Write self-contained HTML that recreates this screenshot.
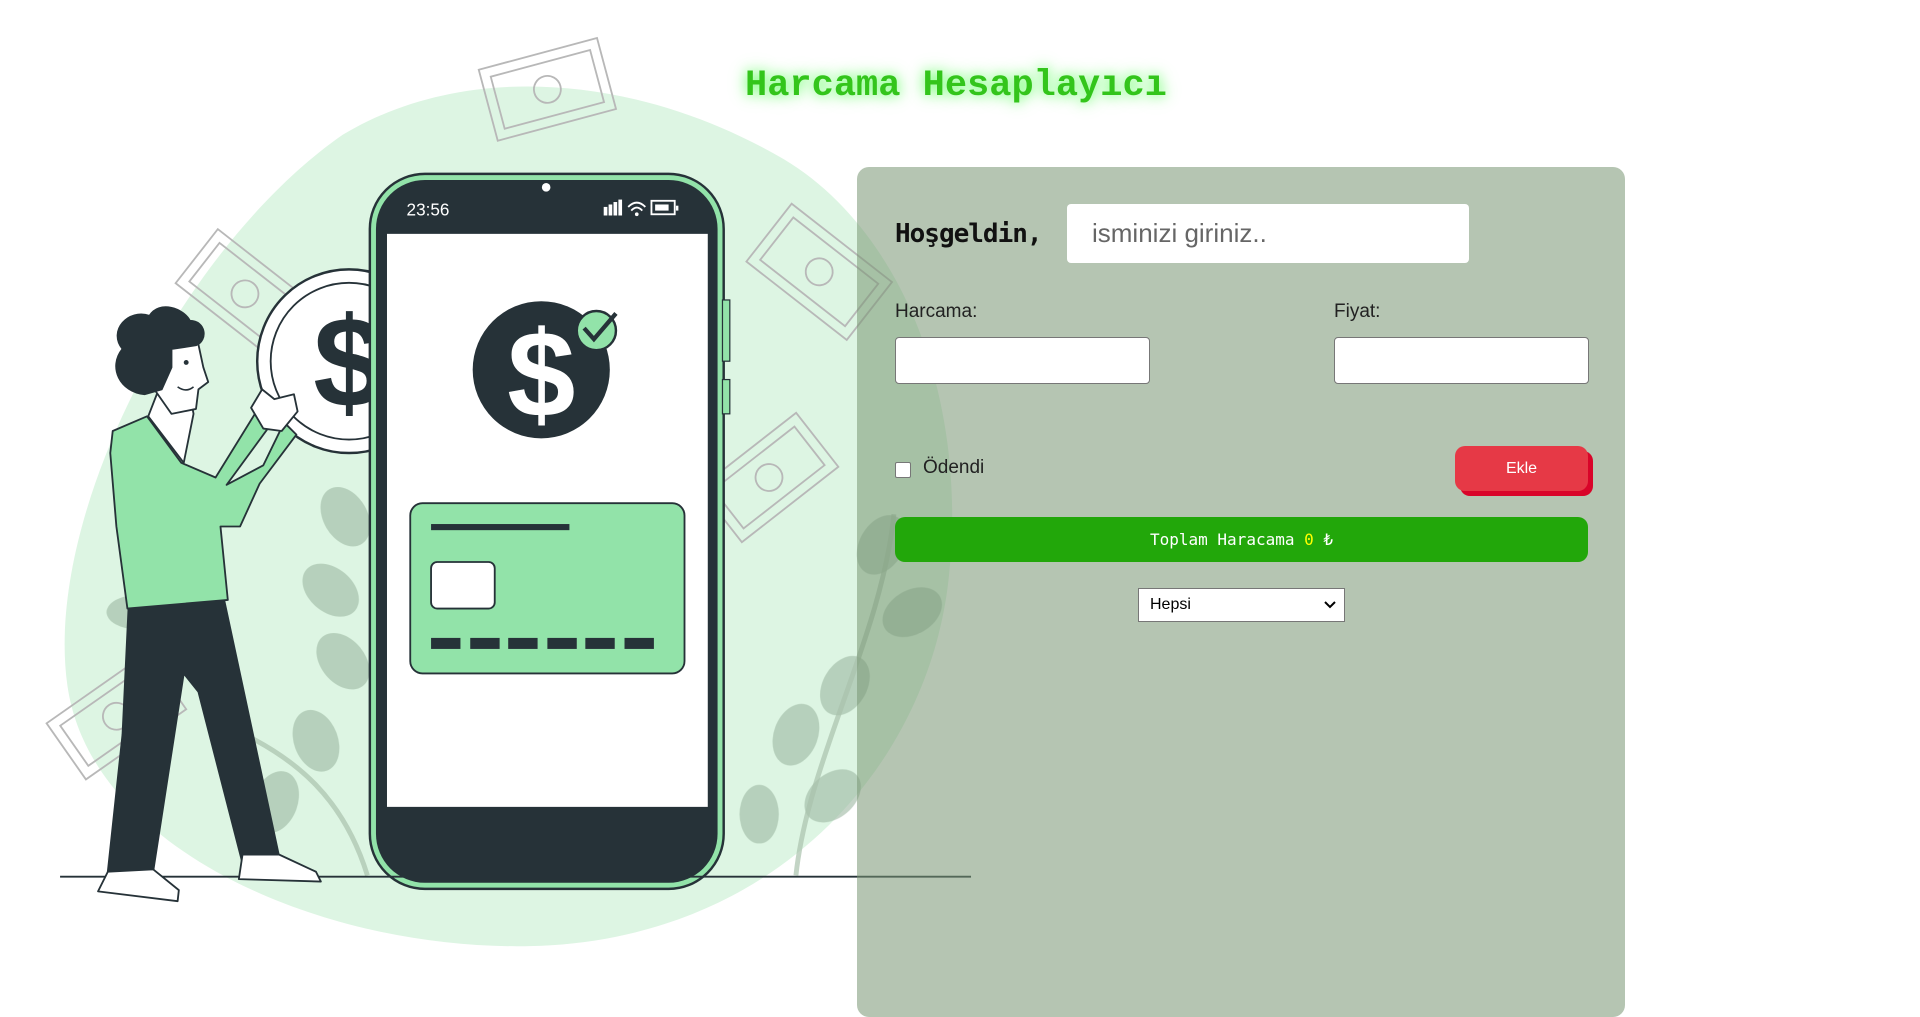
<!DOCTYPE html>
<html><head><meta charset="utf-8">
<style>
body{margin:0;width:1920px;height:1004px;background:#fff;position:relative;overflow:hidden;font-family:"Liberation Sans",sans-serif}
#art{position:absolute;left:0;top:0}
h1{position:absolute;left:745px;top:64px;margin:0;font:bold 37px/44px "Liberation Mono",monospace;color:#33c51b;text-shadow:0 0 12px #7f7,0 0 20px #bfb;white-space:nowrap}
.panel{position:absolute;left:857px;top:167px;width:768px;height:850px;border-radius:12px;background:rgba(120,150,115,.55)}
.abs{position:absolute}
.hos{left:895px;top:217px;font:bold 26px/34px "DejaVu Sans Mono","Liberation Mono",monospace;color:#111;letter-spacing:-1px}
input.t{position:absolute;border:1px solid #777;border-radius:4px;background:#fff;box-sizing:border-box;margin:0}
.name{left:1067px;top:204px;width:402px;height:59px;font-size:26px;padding-left:25px;color:#666;display:flex;align-items:center;background:#fff;border-radius:4px;box-sizing:border-box}
.lbl{font-size:19px;color:#222}
.ck{left:895px;top:462px;width:14px;height:14px;background:#fff;border:1px solid #777;border-radius:2px}
.ekle{left:1455px;top:446px;width:133px;height:45px;background:#e63946;border-radius:10px;box-shadow:5px 5px 0 #d90429;color:#fff;font-size:16px;display:flex;align-items:center;justify-content:center}
.bar{left:895px;top:517px;width:693px;height:45px;background:#22a70a;border-radius:10px;color:#fff;font:16px "DejaVu Sans Mono","Liberation Mono",monospace;display:flex;align-items:center;justify-content:center;white-space:pre}
.sel{left:1138px;top:588px;width:207px;height:34px;background:#fff;border:1px solid #777;box-sizing:border-box;font-size:16px;padding-left:11px;line-height:32px;color:#000}
</style></head><body>
<svg id="art" width="1920" height="1004" viewBox="0 0 1568 820">
<path d="M55,560 C35,420 150,200 280,110 C380,50 520,60 640,130 C740,190 790,330 775,470 C760,620 640,760 450,772 C280,782 75,700 55,560 Z" fill="#ddf5e3"/>
<g fill="none" stroke="#b8b8b8" stroke-width="1.5">
<g transform="translate(447,73) rotate(-15)"><rect x="-50" y="-30" width="100" height="60"/><rect x="-42" y="-22" width="84" height="44"/><circle r="11"/></g>
<g transform="translate(200,240) rotate(38)"><rect x="-50" y="-28" width="100" height="56"/><rect x="-42" y="-20" width="84" height="40"/><circle r="11"/></g>
<g transform="translate(669,222) rotate(38)"><rect x="-52" y="-30" width="104" height="60"/><rect x="-44" y="-22" width="88" height="44"/><circle r="11"/></g>
<g transform="translate(628,390) rotate(-38)"><rect x="-50" y="-28" width="100" height="56"/><rect x="-42" y="-20" width="84" height="40"/><circle r="11"/></g>
<g transform="translate(95,585) rotate(-35)"><rect x="-50" y="-28" width="100" height="56"/><rect x="-42" y="-20" width="84" height="40"/><circle r="11"/></g>
</g>
<g fill="#9db8a2" opacity=".6">
<ellipse cx="282" cy="422" rx="18" ry="26" transform="rotate(-30 282 422)"/>
<ellipse cx="270" cy="482" rx="18" ry="26" transform="rotate(-50 270 482)"/>
<ellipse cx="280" cy="540" rx="18" ry="26" transform="rotate(-40 280 540)"/>
<ellipse cx="258" cy="605" rx="18" ry="26" transform="rotate(-20 258 605)"/>
<ellipse cx="225" cy="655" rx="18" ry="26" transform="rotate(20 225 655)"/>
<ellipse cx="112" cy="500" rx="25" ry="14"/>
<ellipse cx="720" cy="445" rx="18" ry="26" transform="rotate(30 720 445)"/>
<ellipse cx="745" cy="500" rx="18" ry="26" transform="rotate(60 745 500)"/>
<ellipse cx="690" cy="560" rx="18" ry="26" transform="rotate(30 690 560)"/>
<ellipse cx="650" cy="600" rx="18" ry="26" transform="rotate(20 650 600)"/>
<ellipse cx="680" cy="650" rx="18" ry="26" transform="rotate(50 680 650)"/>
<ellipse cx="620" cy="665" rx="16" ry="24"/>
</g>
<g fill="none" stroke="#a9c2ac" stroke-width="4" opacity=".7"><path d="M650,715 C660,620 720,520 730,420"/><path d="M300,715 C280,650 240,620 200,600"/></g>
<circle cx="285" cy="295" r="75" fill="#fff" stroke="#263238" stroke-width="2"/>
<circle cx="285" cy="295" r="64" fill="none" stroke="#263238" stroke-width="1.5"/>
<text x="285" y="332" font-family="Liberation Sans" font-weight="bold" font-size="105" fill="#263238" text-anchor="middle">$</text>
<rect x="302" y="142" width="289" height="584" rx="45" fill="#92e3a9" stroke="#263238" stroke-width="2"/>
<rect x="590" y="245" width="6" height="50" fill="#92e3a9" stroke="#263238"/><rect x="590" y="310" width="6" height="28" fill="#92e3a9" stroke="#263238"/>
<rect x="307" y="147" width="279" height="574" rx="40" fill="#263238"/>
<rect x="316" y="191" width="262" height="468" fill="#fff"/>
<circle cx="446" cy="153" r="3.5" fill="#fff"/>
<text x="332" y="176" font-family="Liberation Sans" font-size="14" fill="#fff">23:56</text>
<g fill="#fff"><rect x="493" y="169" width="3" height="7"/><rect x="497" y="167" width="3" height="9"/><rect x="501" y="165" width="3" height="11"/><rect x="505" y="163" width="3" height="13"/>
<rect x="532" y="164" width="19" height="11" fill="none" stroke="#fff" stroke-width="1.5"/><rect x="535" y="167" width="11" height="5"/><rect x="552" y="168" width="2" height="4"/></g>
<path d="M513,169 Q520,162 527,169 M515.5,172 Q520,167 524.5,172" stroke="#fff" stroke-width="1.5" fill="none"/><circle cx="520" cy="175" r="1.5" fill="#fff"/>
<circle cx="442" cy="302" r="56" fill="#263238"/>
<text x="442" y="340" font-family="Liberation Sans" font-weight="bold" font-size="100" fill="#fff" text-anchor="middle">$</text>
<circle cx="487" cy="270" r="16" fill="#92e3a9" stroke="#263238" stroke-width="2"/>
<path d="M477,268 L485,277 L503,256" stroke="#263238" stroke-width="3.5" fill="none"/>
<rect x="335" y="411" width="224" height="139" rx="10" fill="#92e3a9" stroke="#263238" stroke-width="1.5"/>
<rect x="352" y="428" width="113" height="5" fill="#263238"/>
<rect x="352" y="459" width="52" height="38" rx="5" fill="#fff" stroke="#263238" stroke-width="1.5"/>
<g fill="#263238"><rect x="352" y="521" width="24" height="9"/><rect x="384" y="521" width="24" height="9"/><rect x="415" y="521" width="24" height="9"/><rect x="447" y="521" width="24" height="9"/><rect x="478" y="521" width="24" height="9"/><rect x="510" y="521" width="24" height="9"/></g>
<line x1="49" y1="716" x2="793" y2="716" stroke="#263238" stroke-width="1.5"/>
<g stroke="#263238" stroke-width="1.5" stroke-linejoin="round">
<path d="M105,495 L183,490 L228,700 L198,705 L162,565 L150,550 L125,712 L88,712 L100,600 Z" fill="#263238"/>
<path d="M88,712 L80,728 L145,736 L146,727 L125,710 Z" fill="#fff"/>
<path d="M198,698 L195,718 L262,720 L258,712 L228,698 Z" fill="#fff"/>
<path d="M92,352 L120,340 L148,378 L176,390 L210,335 L226,340 L185,396 L215,380 L232,345 L242,355 L212,395 L196,430 L180,430 L186,490 L104,497 L95,430 L90,370 Z" fill="#92e3a9"/>
<path d="M205,333 L214,318 L224,326 L240,322 L243,336 L230,352 L215,350 Z" fill="#fff"/>
<path d="M121,340 L128,322 L155,322 L158,338 L150,378 Z" fill="#fff"/>
<path d="M130,282 L160,272 L166,300 L170,312 L162,318 L160,334 L140,338 L126,318 Z" fill="#fff"/>
<path d="M100,285 C88,270 105,252 122,258 C130,245 150,252 155,262 C168,262 170,278 160,282 L140,285 L140,300 L132,318 L118,322 C98,320 88,300 100,285 Z" fill="#263238"/>
</g>
<circle cx="152" cy="296" r="2" fill="#263238"/>
<path d="M145,316 Q152,321 158,316" stroke="#263238" fill="none" stroke-width="1.3"/>
</svg>
<h1>Harcama Hesaplayıcı</h1>
<div class="panel"></div>
<div class="abs hos">Hoşgeldin,</div>
<div class="abs name">isminizi giriniz..</div>
<div class="abs lbl" style="left:895px;top:301px">Harcama:</div>
<div class="abs lbl" style="left:1334px;top:301px">Fiyat:</div>
<input class="t" style="left:895px;top:337px;width:255px;height:47px">
<input class="t" style="left:1334px;top:337px;width:255px;height:47px">
<div class="abs ck"></div>
<div class="abs lbl" style="left:923px;top:457px">Ödendi</div>
<div class="abs ekle">Ekle</div>
<div class="abs bar">Toplam Haracama <span style="color:#ff0">0</span> ₺</div>
<div class="abs sel">Hepsi<svg style="position:absolute;right:8px;top:12px" width="12" height="8"><path d="M1,1 L6,6 L11,1" stroke="#000" stroke-width="2" fill="none"/></svg></div>
</body></html>
